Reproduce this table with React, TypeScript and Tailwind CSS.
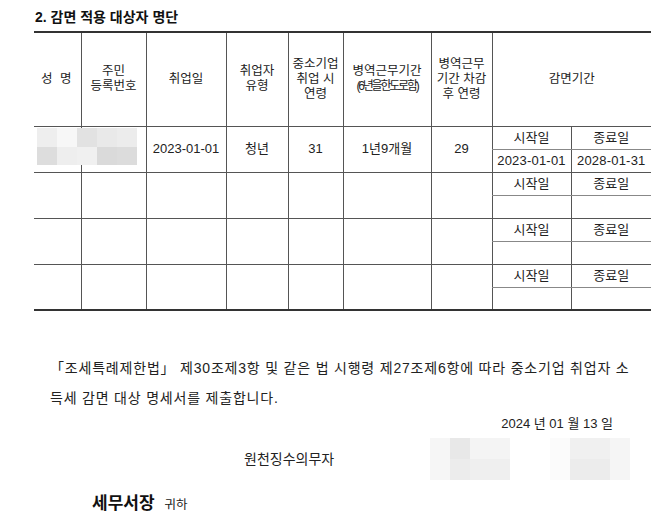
const font = "font-['Liberation_Sans','Noto_Sans_CJK_KR',sans-serif]";

type Row = {
  date?: string;
  type?: string;
  age?: string;
  military?: string;
  afterAge?: string;
  start?: string;
  end?: string;
};

const rows: Row[] = [
  {
    date: "2023-01-01",
    type: "청년",
    age: "31",
    military: "1년9개월",
    afterAge: "29",
    start: "2023-01-01",
    end: "2028-01-31",
  },
  {},
  {},
  {},
];

const blurTop = ["bg-[#eeeeee]", "bg-[#f7f7f7]", "bg-[#e2e2e2]", "bg-[#e9e9e9]", "bg-[#ececec]"];
const blurBottom = ["bg-[#dddddd]", "bg-[#eeeeee]", "bg-[#f0f0f0]", "bg-[#dadada]", "bg-[#dcdcdc]"];

// 개인정보 가림 (성명 / 주민등록번호)
const Blur = () => (
  <div className="absolute left-[37px] top-[97px] grid grid-cols-5 w-[100px] h-[37px]">
    {blurTop.map((c, i) => (
      <div key={"t" + i} className={c} />
    ))}
    {blurBottom.map((c, i) => (
      <div key={"b" + i} className={c} />
    ))}
  </div>
);

const TargetTable = () => {
  const head = "border-l border-[#555] align-middle text-center text-[12.5px] leading-[15px] text-[#222] font-normal";
  const cell = "border-l border-b border-[#555] text-center text-[13px] text-[#222] align-middle";
  const sub = "border-l border-[#555] text-center text-[13px] text-[#222] align-middle h-[23px] p-0";

  return (
    <div className="relative">
      <table className="ml-[34px] w-[617px] table-fixed border-collapse border-t-2 border-b-2 border-[#333]">
        <colgroup>
          <col className="w-[47px]" />
          <col className="w-[65px]" />
          <col className="w-[80px]" />
          <col className="w-[62px]" />
          <col className="w-[55px]" />
          <col className="w-[88px]" />
          <col className="w-[61px]" />
          <col className="w-[79px]" />
          <col className="w-[80px]" />
        </colgroup>
        <thead>
          <tr className="h-[94px] border-b border-[#555]">
            <th className="align-middle text-center text-[12.5px] font-normal text-[#222] tracking-[2px]">
              성 명
            </th>
            <th className={head}>
              주민
              <br />
              등록번호
            </th>
            <th className={head}>취업일</th>
            <th className={head}>
              취업자
              <br />
              유형
            </th>
            <th className={head + " leading-[14px]"}>
              중소기업
              <br />
              취업 시
              <br />
              연령
            </th>
            <th className={head}>
              병역근무기간
              <br />
              <span className="text-[12px] tracking-[-2.2px]">(6년을한도로함)</span>
            </th>
            <th className={head + " leading-[14px]"}>
              병역근무
              <br />
              기간 차감
              <br />후 연령
            </th>
            <th colSpan={2} className={head}>
              감면기간
            </th>
          </tr>
        </thead>
        <tbody>
          {rows.map((r, i) => (
            <>
              <tr key={"a" + i}>
                <td rowSpan={2} className="border-b border-[#555]" />
                <td rowSpan={2} className={cell} />
                <td rowSpan={2} className={cell}>
                  {r.date}
                </td>
                <td rowSpan={2} className={cell}>
                  {r.type}
                </td>
                <td rowSpan={2} className={cell}>
                  {r.age}
                </td>
                <td rowSpan={2} className={cell}>
                  {r.military}
                </td>
                <td rowSpan={2} className={cell}>
                  {r.afterAge}
                </td>
                <td className={sub + " border-b border-b-[#888]"}>시작일</td>
                <td className={sub + " border-b border-b-[#888]"}>종료일</td>
              </tr>
              <tr key={"b" + i} className="border-b border-[#555]">
                <td className={sub + " tracking-[0.2px]"}>{r.start}</td>
                <td className={sub + " tracking-[0.2px]"}>{r.end}</td>
              </tr>
            </>
          ))}
        </tbody>
      </table>
      <Blur />
    </div>
  );
};

export default function App() {
  return (
    <div className={"w-[665px] h-[526px] bg-white overflow-hidden " + font}>
      <h2 className="pl-[35px] pt-[8px] h-[31px] text-[14px] leading-[18px] font-bold text-[#111]">
        2. 감면 적용 대상자 명단
      </h2>
      <TargetTable />
      <div className="pl-[50px] pr-[10px] mt-[42px] text-[14px] leading-[30px] text-[#222] tracking-[0.8px] whitespace-nowrap">
        「조세특례제한법」 제30조제3항 및 같은 법 시행령 제27조제6항에 따라 중소기업 취업자 소
        <br />
        득세 감면 대상 명세서를 제출합니다.
      </div>
      <div className="flex justify-end pr-[52px] mt-[3px] text-[13px] leading-[16px] text-[#222]">
        2024 년 01 월 13 일
      </div>
      <div className="flex items-center mt-[6px] h-[42px]">
        <span className="ml-[244px] w-[186px] text-[14px] text-[#222]">원천징수의무자</span>
        <div className="flex h-[42px] w-[80px]">
          <div className="w-[20px] bg-[#f6f6f6]" />
          <div className="w-[20px] flex flex-col">
            <div className="flex-1 bg-[#e8e8e8]" />
            <div className="flex-1 bg-[#ececec]" />
          </div>
          <div className="w-[40px] flex flex-col">
            <div className="flex-1 bg-[#f4f4f4]" />
            <div className="flex-1 bg-[#efefef]" />
          </div>
        </div>
        <div className="ml-[40px] flex h-[42px] w-[80px]">
          <div className="w-[20px] bg-[#fbfbfb]" />
          <div className="w-[40px] flex flex-col">
            <div className="flex-1 bg-[#f0f0f0]" />
            <div className="flex-1 bg-[#ececec]" />
          </div>
          <div className="w-[20px] bg-[#f5f5f5]" />
        </div>
      </div>
      <div className="flex items-baseline mt-[12px] pl-[92px] leading-[24px]">
        <span className="text-[17px] font-bold text-[#111]">세무서장</span>
        <span className="ml-[10px] text-[12.5px] text-[#222]">귀하</span>
      </div>
    </div>
  );
}
